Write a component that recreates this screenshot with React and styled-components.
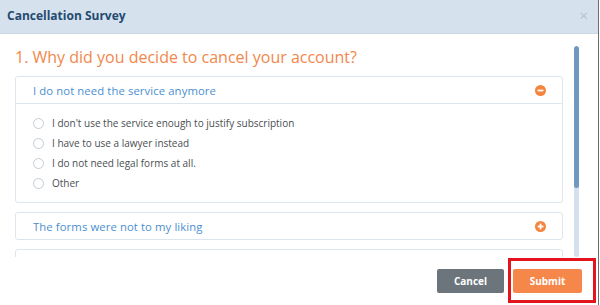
import styled, { createGlobalStyle } from "styled-components";

const GlobalStyle = createGlobalStyle`
  html, body {
    margin: 0;
    padding: 0;
    background: #ffffff;
  }
  body {
    font-family: "Open Sans", "Liberation Sans", sans-serif;
  }
`;

const Modal = styled.div`
  position: relative;
  width: 598px;
  height: 305px;
  border-right: 1px solid #6d6d6d;
  background: #fff;
  display: flex;
  flex-direction: column;
  overflow: hidden;
`;

const Header = styled.div`
  height: 34px;
  flex: none;
  background: #d5e1ed;
  border-bottom: 1px solid #c9d6e3;
  box-sizing: border-box;
  display: flex;
  align-items: center;
  justify-content: space-between;
  padding: 0 10px 2px 7px;
`;

const Title = styled.h1`
  margin: 0;
  font-size: 12px;
  font-weight: 700;
  color: #244a70;
`;

const Close = styled.span`
  font-size: 15px;
  color: #b6c2ce;
  line-height: 1;
`;

const ScrollArea = styled.div`
  height: 223px;
  flex: none;
  display: flex;
  overflow: hidden;
`;

const Content = styled.div`
  width: 548px;
  padding: 12px 0 0 15px;
`;

const Question = styled.h2`
  margin: 0 0 8px;
  font-size: 16px;
  line-height: 22px;
  font-weight: 400;
  color: #f2874c;
`;

const Panel = styled.div`
  border: 1px solid #dde6ee;
  border-radius: 3px;
  margin-bottom: ${(p) => p.$gap}px;
`;

const PanelHead = styled.div`
  height: 26px;
  display: flex;
  align-items: center;
  justify-content: space-between;
  padding: 0 16px 0 17px;
  border-bottom: ${(p) => (p.$open ? "1px solid #dde6ee" : "none")};
`;

const PanelTitle = styled.span`
  font-size: 11.3px;
  color: #4a8fcf;
  letter-spacing: 0.1px;
`;

const Options = styled.div`
  padding: 9px 0 9px 17px;
  display: flex;
  flex-direction: column;
`;

const Option = styled.label`
  height: 20px;
  display: flex;
  align-items: center;
  gap: 8px;
  font-size: 10px;
  color: #4a4e52;
`;

const Radio = styled.span`
  width: 9px;
  height: 9px;
  border: 1px solid #c4ccd5;
  border-radius: 50%;
  flex: none;
`;

const Scrollbar = styled.div`
  width: 5px;
  margin: 12px 0 0 11px;
  height: 211px;
  border-radius: 3px;
  background: #d3e1ef;
  overflow: hidden;
`;

const Thumb = styled.div`
  height: 142px;
  background: #7099c1;
  border-radius: 3px;
`;

const Footer = styled.div`
  flex: 1;
  display: flex;
  justify-content: flex-end;
  align-items: flex-start;
  gap: 9px;
  padding: 12px 16px 0 0;
`;

const Button = styled.button`
  height: 24px;
  width: ${(p) => p.$w}px;
  border: none;
  border-radius: 2px;
  background: ${(p) => p.$bg};
  color: #fff;
  font-family: "Open Sans", "Liberation Sans", sans-serif;
  font-size: 10px;
  font-weight: 700;
  padding: 0;
`;

const Highlight = styled.div`
  position: absolute;
  left: 508px;
  top: 258px;
  width: 88px;
  height: 45px;
  box-sizing: border-box;
  border: 3px solid #e3141d;
`;

const MinusIcon = () => (
  <svg width="11" height="11" viewBox="0 0 11 11">
    <circle cx="5.5" cy="5.5" r="5.5" fill="#f5843f" />
    <rect x="2.6" y="4.6" width="5.8" height="1.8" fill="#fff" />
  </svg>
);

const PlusIcon = () => (
  <svg width="11" height="11" viewBox="0 0 11 11">
    <circle cx="5.5" cy="5.5" r="5.5" fill="#f5843f" />
    <rect x="2.6" y="4.6" width="5.8" height="1.8" fill="#fff" />
    <rect x="4.6" y="2.6" width="1.8" height="5.8" fill="#fff" />
  </svg>
);

const options = [
  "I don't use the service enough to justify subscription",
  "I have to use a lawyer instead",
  "I do not need legal forms at all.",
  "Other",
];

export default function App() {
  return (
    <>
      <GlobalStyle />
      <Modal>
        <Header>
          <Title>Cancellation Survey</Title>
          <Close>×</Close>
        </Header>
        <ScrollArea>
          <Content>
            <Question>1. Why did you decide to cancel your account?</Question>
            <Panel $gap={9}>
              <PanelHead $open>
                <PanelTitle>I do not need the service anymore</PanelTitle>
                <MinusIcon />
              </PanelHead>
              <Options>
                {options.map((o) => (
                  <Option key={o}>
                    <Radio />
                    {o}
                  </Option>
                ))}
              </Options>
            </Panel>
            <Panel $gap={9}>
              <PanelHead>
                <PanelTitle>The forms were not to my liking</PanelTitle>
                <PlusIcon />
              </PanelHead>
            </Panel>
            <Panel $gap={0}>
              <PanelHead />
            </Panel>
          </Content>
          <Scrollbar>
            <Thumb />
          </Scrollbar>
        </ScrollArea>
        <Footer>
          <Button $w={67} $bg="#6c747c">Cancel</Button>
          <Button $w={69} $bg="#f5874a">Submit</Button>
        </Footer>
        <Highlight />
      </Modal>
    </>
  );
}
